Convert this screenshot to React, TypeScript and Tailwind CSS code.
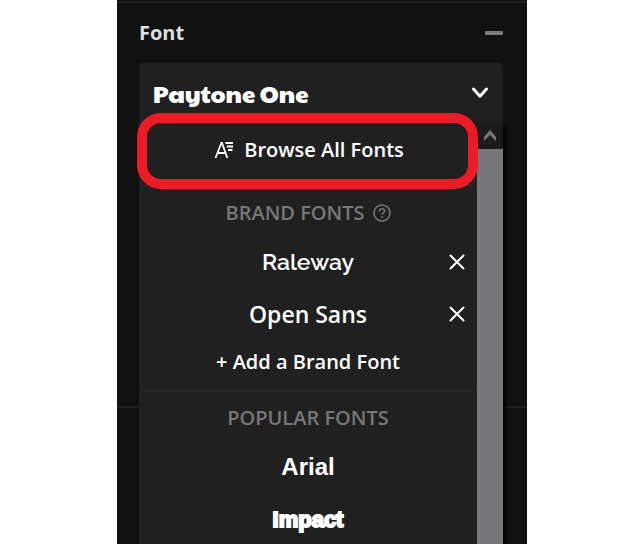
import { useState } from 'react';

const brandFonts = [
  { name: 'Raleway', className: 'font-[Raleway,Lato,sans-serif] font-semibold' },
  { name: 'Open Sans', className: 'font-semibold' },
];

const popularFonts = [
  { name: 'Arial', className: "text-2xl font-['Liberation_Sans',Arial,sans-serif] font-bold" },
  {
    name: 'Impact',
    className:
      "text-[22px] font-['Liberation_Sans_Narrow',sans-serif] font-black [-webkit-text-stroke:2px_white]",
  },
];

function BrowseIcon() {
  return (
    <svg width="20" height="18" viewBox="0 0 20 18" fill="none" stroke="currentColor" aria-hidden="true">
      <path d="M1.5 17 7.4 2h.6l5.3 15M3.6 12h8" strokeWidth="1.8" />
      <path d="M11.5 2H19M12.8 5.5H19M14 9h4.5" strokeWidth="1.8" />
    </svg>
  );
}

function CloseIcon() {
  return (
    <svg width="16" height="16" viewBox="0 0 16 16" fill="none" stroke="currentColor" strokeWidth="2" strokeLinecap="round" aria-hidden="true">
      <path d="M1.5 1.5l13 13M14.5 1.5l-13 13" />
    </svg>
  );
}

function HelpIcon() {
  return (
    <svg width="18" height="18" viewBox="0 0 18 18" fill="none" stroke="currentColor" strokeWidth="1.5" aria-hidden="true">
      <circle cx="9" cy="9" r="8" />
      <path d="M6.5 7.2c0-1.5 1.1-2.4 2.5-2.4s2.5.9 2.5 2.2c0 1.7-2.3 1.8-2.3 3.6" strokeLinecap="round" />
      <circle cx="9.1" cy="13" r=".9" fill="currentColor" stroke="none" />
    </svg>
  );
}

export default function App() {
  const [fonts, setFonts] = useState(brandFonts);
  const [open, setOpen] = useState(true);

  return (
    <div className="flex h-screen bg-white pl-[117px] pr-[114px] font-['Open_Sans',sans-serif] text-white">
      <aside className="min-w-0 flex-1 overflow-hidden bg-[#111111] pt-px">
        <section className="min-h-[405px] border-t-2 border-[#202020] pl-[22px] pr-6">
          <div className="flex h-15 items-center justify-between">
            <h2 className="text-xl font-bold text-[#dedede]">Font</h2>
            <button type="button" aria-label="Collapse" className="h-5 py-2">
              <span className="block h-1 w-[18px] rounded-[1px] bg-[#7b7b7b]" />
            </button>
          </div>

          <div className="relative">
            <button
              type="button"
              aria-expanded={open}
              onClick={() => setOpen(!open)}
              className="flex h-15 w-full items-center justify-between rounded-t bg-[#202020] px-3.5"
            >
              <span className="font-['Paytone_One','Lato',sans-serif] text-2xl font-normal">
                Paytone One
              </span>
              <svg width="18" height="12" viewBox="0 0 18 12" fill="none" stroke="currentColor" strokeWidth="3" strokeLinecap="round" strokeLinejoin="round" aria-hidden="true">
                <path d="M2.5 2L9 9.2 15.5 2" />
              </svg>
            </button>

            {open && (
              <div className="absolute inset-x-0 top-full flex bg-[#202020] shadow-[3px_4px_4px_#000000]">
                <div className="min-w-0 flex-1">
                  <div className="relative pb-2">
                    <button type="button" className="flex h-[54px] w-full items-center justify-center gap-2.5 pl-0.5 text-xl font-semibold">
                      <BrowseIcon />
                      Browse All Fonts
                    </button>
                    <div className="pointer-events-none absolute -left-0.5 -right-px -top-2.5 -bottom-1 rounded-3xl border-10 border-[#ed1c24]" />
                  </div>

                  <div className="border-t border-[#303030] pt-1 pb-1.5">
                    <h3 className="flex h-[46px] items-center justify-center gap-2 text-xl font-semibold text-[#77777a]">
                      BRAND FONTS
                      <HelpIcon />
                    </h3>
                    <ul>
                      {fonts.map((font) => (
                        <li key={font.name} className="relative">
                          <button type="button" className={`h-[52px] w-full text-[23px] ${font.className}`}>
                            {font.name}
                          </button>
                          <button
                            type="button"
                            aria-label={`Remove ${font.name}`}
                            onClick={() => setFonts(fonts.filter((f) => f.name !== font.name))}
                            className="absolute inset-y-0 right-3 flex items-center"
                          >
                            <CloseIcon />
                          </button>
                        </li>
                      ))}
                    </ul>
                    <button type="button" className="h-11 w-full text-xl font-semibold">
                      + Add a Brand Font
                    </button>
                  </div>

                  <div className="border-t border-[#303030] pt-1">
                    <h3 className="flex h-[46px] items-center justify-center text-xl font-semibold text-[#77777a]">
                      POPULAR FONTS
                    </h3>
                    <ul>
                      {popularFonts.map((font) => (
                        <li key={font.name}>
                          <button type="button" className={`h-[52px] w-full ${font.className}`}>
                            {font.name}
                          </button>
                        </li>
                      ))}
                    </ul>
                  </div>
                </div>

                <div className="flex w-[26px] flex-col bg-[#77777a]">
                  <button type="button" aria-label="Scroll up" className="flex h-[26px] items-center justify-center bg-[#1c1c1c] text-[#77777a]">
                    <svg width="12" height="12" viewBox="0 0 12 12" fill="currentColor" aria-hidden="true">
                      <path d="M6 0l6 7v4L6 5 0 11V7z" />
                    </svg>
                  </button>
                </div>
              </div>
            )}
          </div>
        </section>
        <section className="border-t-2 border-[#202020]" />
      </aside>
    </div>
  );
}
